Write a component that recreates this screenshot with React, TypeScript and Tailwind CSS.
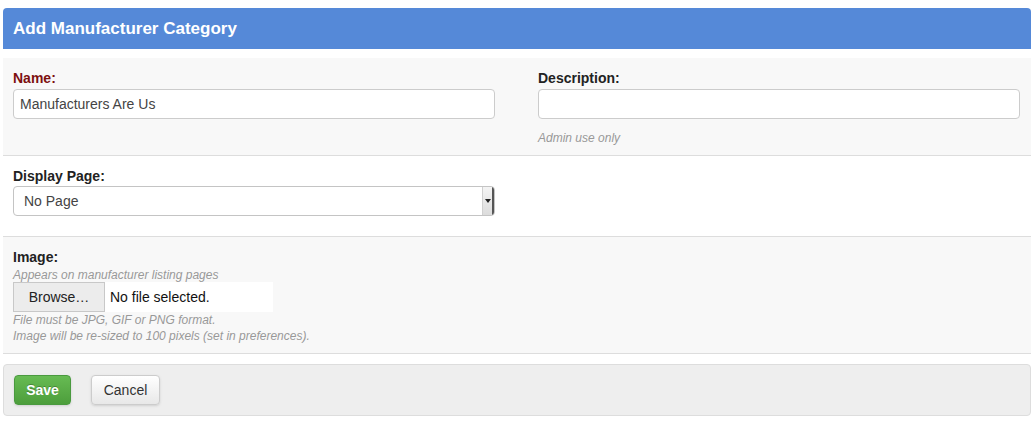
import React from 'react';

const font = { fontFamily: '"Liberation Sans", Arial, sans-serif' };

export default function App() {
  return (
    <div className="min-h-screen bg-white pl-[3px] pr-[5px] pt-[8px] text-[14px] text-[#333]" style={font}>
      {/* Header */}
      <div className="h-[41px] rounded-t-[4px] bg-[#5589d8] px-[10px] flex items-center">
        <h1 className="text-[17px] font-bold text-white leading-none">Add Manufacturer Category</h1>
      </div>

      {/* Name / Description */}
      <div className="mt-[9px] bg-[#f8f8f8] border-b border-[#dddddd] pl-[10px] pr-[11px] pt-[10px] pb-[9px] grid grid-cols-2 gap-x-[43px]">
        <div>
          <label className="block font-bold leading-[20px] text-[#7d1010]">Name:</label>
          <input
            readOnly
            value="Manufacturers Are Us"
            className="mt-[1px] block w-full h-[30px] rounded-[4px] border border-[#cccccc] bg-white px-[6px] text-[14px] text-[#444] outline-none"
            style={font}
          />
        </div>
        <div>
          <label className="block font-bold leading-[20px] text-[#222]">Description:</label>
          <input
            readOnly
            className="mt-[1px] block w-full h-[30px] rounded-[4px] border border-[#cccccc] bg-white px-[6px] text-[14px] outline-none"
          />
          <p className="mt-[11px] text-[12px] italic leading-[16px] text-[#999]">Admin use only</p>
        </div>
      </div>

      {/* Display page */}
      <div className="bg-white border-b border-[#dddddd] px-[10px] pt-[10px] pb-[20px]">
        <label className="block font-bold leading-[20px] text-[#222]">Display Page:</label>
        <div className="w-[482px] h-[30px] rounded-[4px] border border-[#c4c4c4] bg-white flex items-center overflow-hidden">
          <span className="flex-1 pl-[10px] text-[14px] text-[#444]">No Page</span>
          <div className="h-full w-[12px] bg-gradient-to-b from-[#f4f4f4] to-[#dcdcdc] border-l border-[#d0d0d0] border-r-2 border-r-[#555] flex items-center justify-center">
            <div className="w-0 h-0 border-l-[3px] border-r-[3px] border-t-[4px] border-l-transparent border-r-transparent border-t-[#222]" />
          </div>
        </div>
      </div>

      {/* Image */}
      <div className="bg-[#f8f8f8] border-b border-[#dddddd] px-[10px] pt-[10px] pb-[9px]">
        <label className="block font-bold leading-[20px] text-[#222]">Image:</label>
        <p className="text-[12px] italic leading-[16px] text-[#999]">Appears on manufacturer listing pages</p>
        <div className="flex h-[30px] w-[260px] mt-[-1px]">
          <div className="w-[92px] h-full bg-[#ececec] border border-[#c8c8c8] flex items-center justify-center text-[14px] text-[#222]">
            Browse…
          </div>
          <div className="flex-1 h-full bg-white flex items-center pl-[5px] text-[14px] text-[#111]">No file selected.</div>
        </div>
        <p className="text-[12px] italic leading-[16px] text-[#999]">File must be JPG, GIF or PNG format.</p>
        <p className="text-[12px] italic leading-[16px] text-[#999]">Image will be re-sized to 100 pixels (set in preferences).</p>
      </div>

      {/* Footer */}
      <div className="mt-[10px] h-[52px] rounded-[4px] border border-[#dddddd] bg-[#eeeeee] px-[10px] flex items-center gap-[20px]">
        <button
          className="h-[30px] w-[57px] rounded-[4px] border border-[#4a9a3f] bg-gradient-to-b from-[#67bb53] to-[#4d9e3c] text-[14px] font-bold text-white shadow-sm"
          style={{ ...font, textShadow: '0 -1px 0 rgba(0,0,0,0.25)' }}
        >
          Save
        </button>
        <button
          className="h-[30px] w-[69px] rounded-[4px] border border-[#cccccc] bg-gradient-to-b from-white to-[#e8e8e8] text-[14px] text-[#333] shadow-sm"
          style={font}
        >
          Cancel
        </button>
      </div>
    </div>
  );
}
